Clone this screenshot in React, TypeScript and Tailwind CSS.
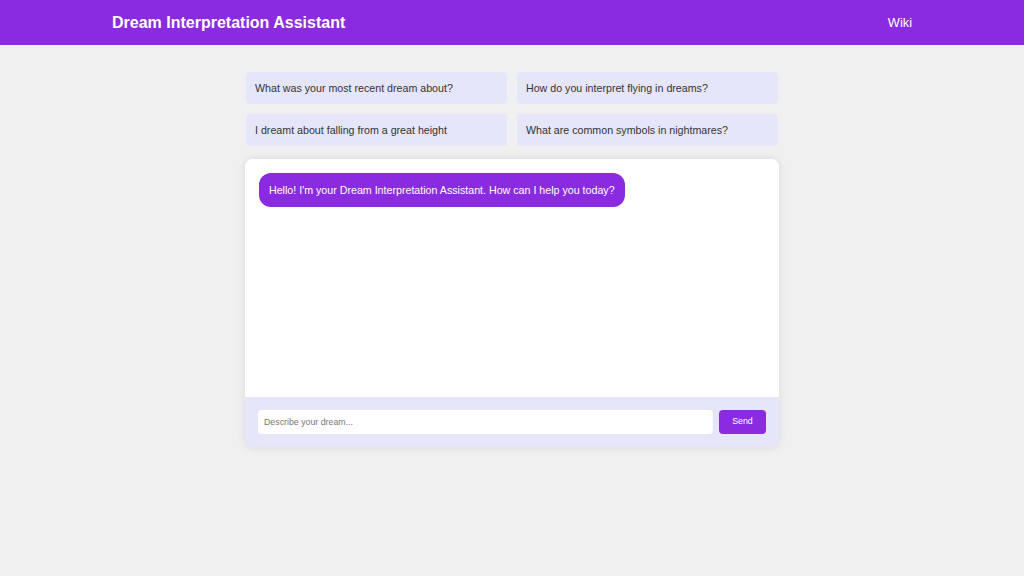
const suggestions = [
  'What was your most recent dream about?',
  'How do you interpret flying in dreams?',
  'I dreamt about falling from a great height',
  'What are common symbols in nightmares?',
];

export default function App() {
  return (
    <div className="min-h-[576px] bg-[#f0f0f0] font-['Liberation_Sans',Arial,sans-serif]">
      {/* Header */}
      <header className="h-[45px] bg-[#8a2be2] text-white">
        <div className="max-w-[800px] mx-auto h-full flex items-center justify-between">
          <h1 className="text-[16px] font-bold">Dream Interpretation Assistant</h1>
          <a className="text-[12.8px]">Wiki</a>
        </div>
      </header>

      <main className="w-[534px] mx-auto pt-[27px]">
        {/* Suggestions */}
        <div className="grid grid-cols-2 gap-x-[10px] gap-y-[10px] px-px">
          {suggestions.map((s) => (
            <div
              key={s}
              className="h-[32px] flex items-center px-[9px] bg-[#e6e6fa] rounded-[4px] text-[10.67px] text-[#333]"
            >
              {s}
            </div>
          ))}
        </div>

        {/* Chat */}
        <div className="mt-[13px] rounded-[8px] overflow-hidden shadow-[0_0_8px_rgba(0,0,0,0.1)]">
          <div className="h-[238px] bg-white p-[14px]">
            <div className="inline-block bg-[#8a2be2] text-white text-[10.67px] rounded-[12px] px-[10px] py-[10px] leading-[14px]">
              Hello! I&apos;m your Dream Interpretation Assistant. How can I help you today?
            </div>
          </div>
          <div className="h-[50px] bg-[#e6e6fa] flex items-center gap-[6px] px-[13px]">
            <input
              placeholder="Describe your dream..."
              className="flex-1 h-[24px] bg-white rounded-[4px] px-[6px] text-[8.8px] text-[#333] placeholder:text-[#777] outline-none"
            />
            <button className="h-[24px] w-[47px] bg-[#8a2be2] text-white text-[8.8px] rounded-[4px]">
              Send
            </button>
          </div>
        </div>
      </main>
    </div>
  );
}
